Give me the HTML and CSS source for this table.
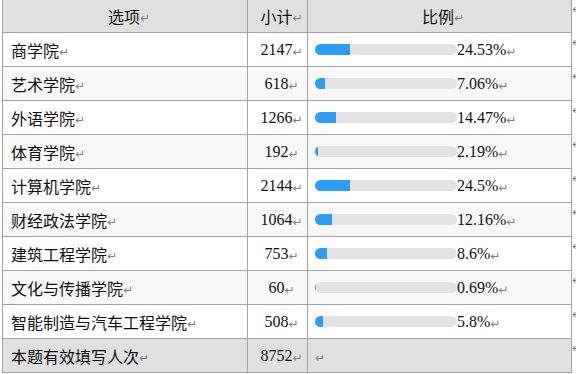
FILE: index.html
```html
<!DOCTYPE html>
<html lang="zh">
<head>
<meta charset="utf-8">
<title>统计表</title>
<link rel="stylesheet" href="styles.css">
</head>
<body>
<div class="table">
  <div class="row head">
    <div class="cell c1 center">选项<span class="m">↵</span></div>
    <div class="cell c2">小计<span class="m">↵</span></div>
    <div class="cell c3 center">比例<span class="m">↵</span></div>
    <div class="end"><span class="m">↵</span></div>
  </div>
  <div class="row">
    <div class="cell c1">商学院<span class="m">↵</span></div>
    <div class="cell c2 num">2147<span class="m">↵</span></div>
    <div class="cell c3"><div class="bar"><div class="fill" style="width:24.53%"></div></div><span class="pct">24.53%</span><span class="m">↵</span></div>
    <div class="end"><span class="m">↵</span></div>
  </div>
  <div class="row alt">
    <div class="cell c1">艺术学院<span class="m">↵</span></div>
    <div class="cell c2 num">618<span class="m">↵</span></div>
    <div class="cell c3"><div class="bar"><div class="fill" style="width:7.06%"></div></div><span class="pct">7.06%</span><span class="m">↵</span></div>
    <div class="end"><span class="m">↵</span></div>
  </div>
  <div class="row">
    <div class="cell c1">外语学院<span class="m">↵</span></div>
    <div class="cell c2 num">1266<span class="m">↵</span></div>
    <div class="cell c3"><div class="bar"><div class="fill" style="width:14.47%"></div></div><span class="pct">14.47%</span><span class="m">↵</span></div>
    <div class="end"><span class="m">↵</span></div>
  </div>
  <div class="row alt">
    <div class="cell c1">体育学院<span class="m">↵</span></div>
    <div class="cell c2 num">192<span class="m">↵</span></div>
    <div class="cell c3"><div class="bar"><div class="fill" style="width:2.19%"></div></div><span class="pct">2.19%</span><span class="m">↵</span></div>
    <div class="end"><span class="m">↵</span></div>
  </div>
  <div class="row">
    <div class="cell c1">计算机学院<span class="m">↵</span></div>
    <div class="cell c2 num">2144<span class="m">↵</span></div>
    <div class="cell c3"><div class="bar"><div class="fill" style="width:24.5%"></div></div><span class="pct">24.5%</span><span class="m">↵</span></div>
    <div class="end"><span class="m">↵</span></div>
  </div>
  <div class="row alt">
    <div class="cell c1">财经政法学院<span class="m">↵</span></div>
    <div class="cell c2 num">1064<span class="m">↵</span></div>
    <div class="cell c3"><div class="bar"><div class="fill" style="width:12.16%"></div></div><span class="pct">12.16%</span><span class="m">↵</span></div>
    <div class="end"><span class="m">↵</span></div>
  </div>
  <div class="row">
    <div class="cell c1">建筑工程学院<span class="m">↵</span></div>
    <div class="cell c2 num">753<span class="m">↵</span></div>
    <div class="cell c3"><div class="bar"><div class="fill" style="width:8.6%"></div></div><span class="pct">8.6%</span><span class="m">↵</span></div>
    <div class="end"><span class="m">↵</span></div>
  </div>
  <div class="row alt">
    <div class="cell c1">文化与传播学院<span class="m">↵</span></div>
    <div class="cell c2 num">60<span class="m">↵</span></div>
    <div class="cell c3"><div class="bar"><div class="fill" style="width:0.69%"></div></div><span class="pct">0.69%</span><span class="m">↵</span></div>
    <div class="end"><span class="m">↵</span></div>
  </div>
  <div class="row">
    <div class="cell c1">智能制造与汽车工程学院<span class="m">↵</span></div>
    <div class="cell c2 num">508<span class="m">↵</span></div>
    <div class="cell c3"><div class="bar"><div class="fill" style="width:5.8%"></div></div><span class="pct">5.8%</span><span class="m">↵</span></div>
    <div class="end"><span class="m">↵</span></div>
  </div>
  <div class="row total">
    <div class="cell c1">本题有效填写人次<span class="m">↵</span></div>
    <div class="cell c2 num">8752<span class="m">↵</span></div>
    <div class="cell c3"><span class="m">↵</span></div>
    <div class="end"><span class="m">↵</span></div>
  </div>
</div>
</body>
</html>
```

FILE: styles.css
```css
html, body {
  margin: 0;
  padding: 0;
  background: #ffffff;
  overflow: hidden;
}

body {
  font-family: "Noto Sans CJK SC", "Liberation Sans", sans-serif;
  font-size: 16px;
  color: #111111;
}

.table {
  margin-left: 2px;
  width: 574px;
}

.row {
  display: grid;
  grid-template-columns: 246px 60px 264px 4px;
  height: 34px;
  background: #ffffff;
}

.row.head {
  height: 33px;
  background: #e0e0e0;
}

.row.alt {
  background: #f8f8f8;
}

.row.total {
  background: #e0e0e0;
}

.cell {
  box-sizing: border-box;
  display: flex;
  align-items: center;
  border-right: 1px solid #a3a3a3;
  border-bottom: 1px solid #a3a3a3;
  padding-left: 8px;
  white-space: nowrap;
  line-height: 20px;
}

.c1 {
  border-left: 1px solid #a3a3a3;
}

.c2 {
  justify-content: center;
  font-family: "Liberation Serif", "Noto Sans CJK SC", serif;
}

.head .c2 {
  font-family: "Noto Sans CJK SC", sans-serif;
}

.c3 {
  padding-left: 7px;
}

.center {
  justify-content: center;
}

.end {
  display: flex;
  align-items: flex-start;
  background: #ffffff;
  padding-left: 0;
  padding-top: 4px;
  line-height: 12px;
  font-size: 12px;
  white-space: nowrap;
}

.m {
  font-family: "DejaVu Sans", sans-serif;
  font-size: 12px;
  color: #808080;
  line-height: 10px;
  margin-left: 0;
  position: relative;
  top: 2px;
}

.end .m {
  top: -1px;
  line-height: 12px;
}

.bar {
  width: 142px;
  height: 11px;
  border-radius: 6px;
  background: #e3e3e5;
  overflow: hidden;
  flex: none;
}

.fill {
  height: 100%;
  background: #2b9ff7;
}

.pct {
  font-family: "Liberation Serif", serif;
  font-size: 16px;
}
```
